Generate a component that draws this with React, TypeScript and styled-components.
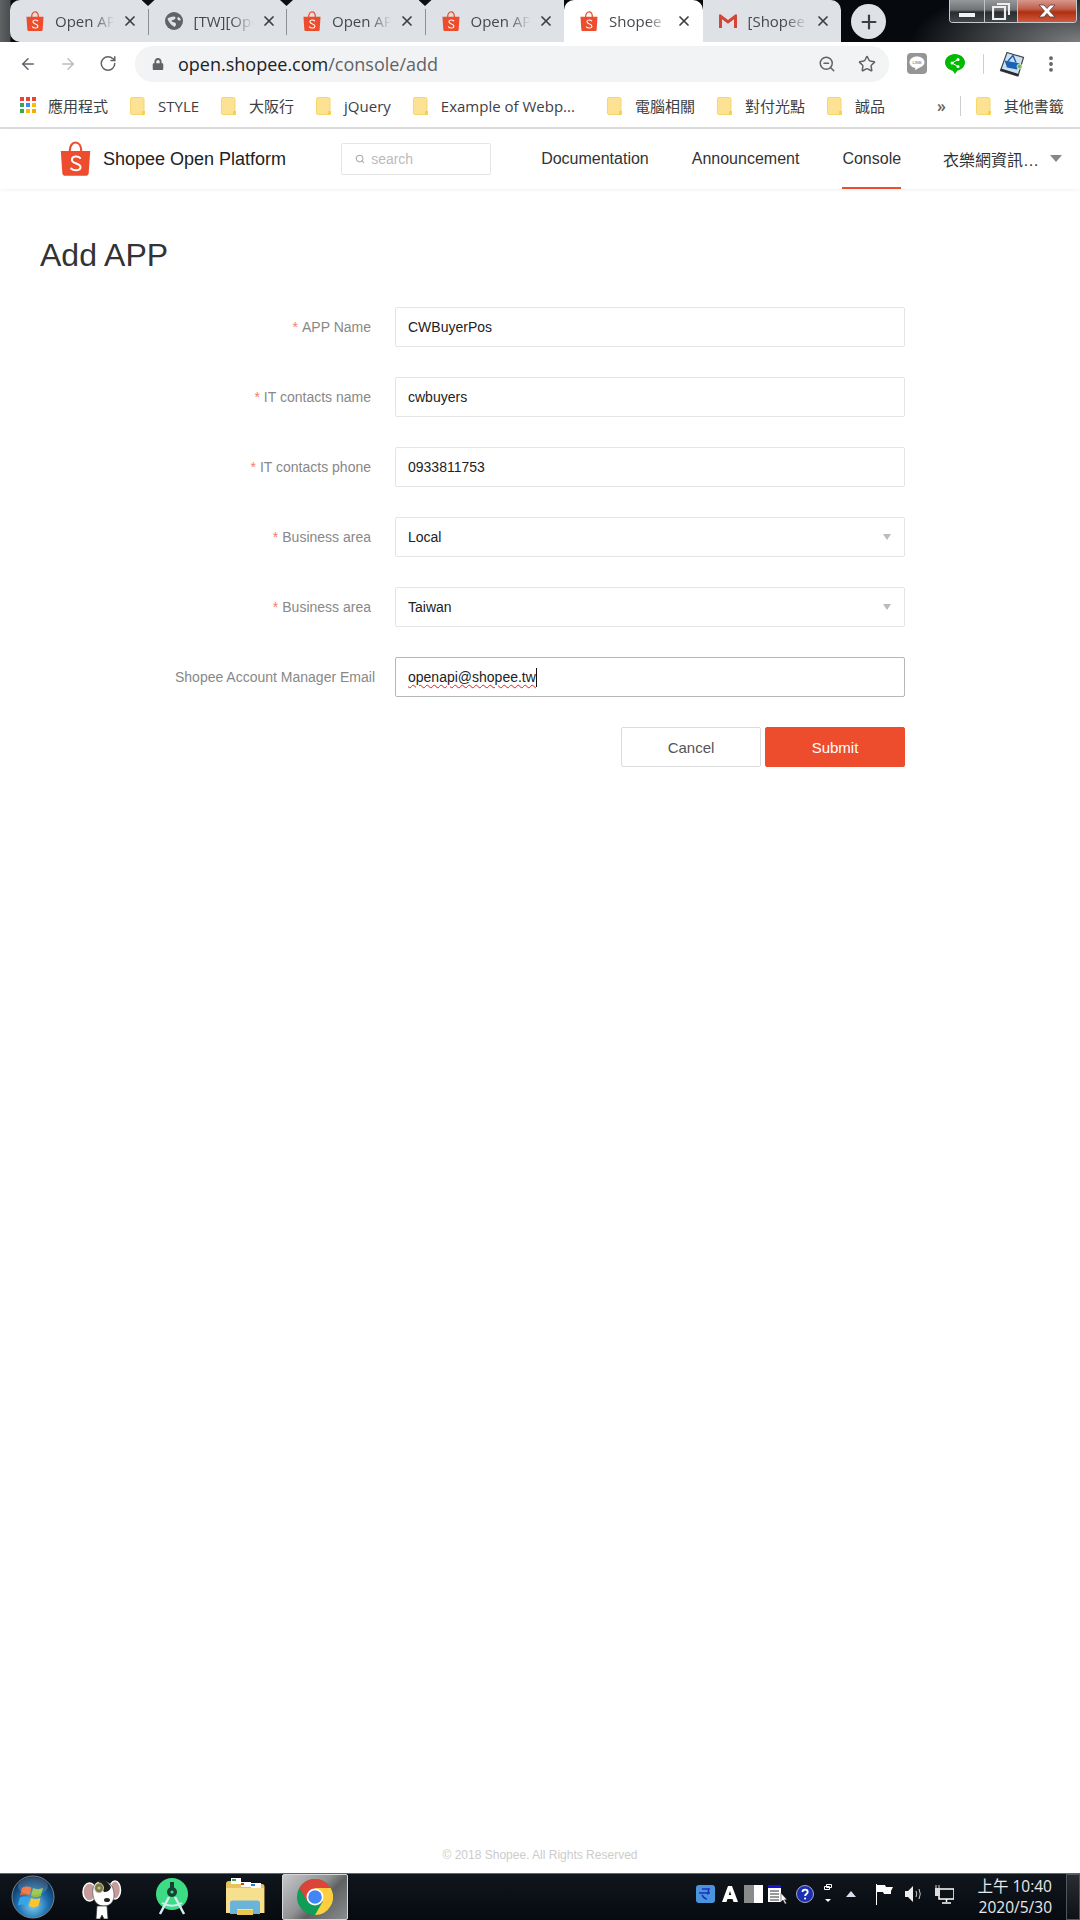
import React from "react";
import styled, { createGlobalStyle } from "styled-components";
import { ArrowLeft, ArrowRight, RotateCw, ZoomOut, Star, X, Plus, MoreVertical, Search } from "lucide-react";
import { FaLock } from "react-icons/fa";

const UI_FONT = `"Open Sans", "Noto Sans CJK TC", sans-serif`;
const WEB_FONT = `"Liberation Sans", "Noto Sans CJK TC", sans-serif`;

const Global = createGlobalStyle`
  html, body { margin: 0; padding: 0; background: #fff; }
  * { box-sizing: border-box; }
`;

const Page = styled.div`
  width: 1080px;
  height: 1920px;
  display: flex;
  flex-direction: column;
  font-family: ${WEB_FONT};
  overflow: hidden;
`;

/* ---------- browser tab strip ---------- */
const TabStrip = styled.div`
  height: 42px;
  flex: none;
  display: flex;
  padding-left: 10px;
  background:
    radial-gradient(ellipse 170px 60px at 100% 100%, #7c7e80, transparent),
    linear-gradient(90deg, #606365 0, #4a4c4e 10px, #0a0c10 11px, #05080c 100%);
`;

const Tab = styled.div<{ $active?: boolean; $sep?: boolean; $first?: boolean; $last?: boolean }>`
  position: relative;
  width: 138.5px;
  height: 42px;
  flex: none;
  display: flex;
  align-items: center;
  padding-left: 16px;
  background: ${(p) => (p.$active ? "#fff" : "#dee1e6")};
  border-radius: ${(p) => (p.$active ? "10px 10px 0 0" : p.$first ? "10px 0 0 10px" : p.$last ? "0 10px 0 0" : "0")};
  &::after {
    content: "";
    display: ${(p) => (p.$sep ? "block" : "none")};
    position: absolute;
    right: 0;
    top: 9px;
    width: 1px;
    height: 26px;
    background: #8b8e93;
  }
  &::before {
    content: "";
    display: ${(p) => (p.$sep ? "block" : "none")};
    position: absolute;
    right: -6px;
    top: 0;
    width: 13px;
    height: 6px;
    z-index: 1;
    clip-path: polygon(0 0, 100% 0, 50% 100%);
    background: #0c0e12;
  }
`;

const TabIcon = styled.span`
  width: 18px;
  height: 20px;
  flex: none;
  display: flex;
  align-items: center;
  justify-content: center;
  color: #5f6368;
`;

const TabTitle = styled.span`
  width: 62px;
  margin-left: 11px;
  flex: none;
  overflow: hidden;
  white-space: nowrap;
  font: 15px ${UI_FONT};
  color: #45484c;
  -webkit-mask-image: linear-gradient(90deg, #000 60%, transparent 96%);
  mask-image: linear-gradient(90deg, #000 60%, transparent 96%);
`;

const TabClose = styled.span`
  width: 16px;
  height: 16px;
  margin-left: 5px;
  flex: none;
  display: flex;
  color: #3c4043;
`;

const NewTab = styled.div`
  width: 35px;
  height: 35px;
  margin: 4px 0 0 10px;
  flex: none;
  border-radius: 50%;
  background: #dee1e6;
  color: #3c4043;
  display: flex;
  align-items: center;
  justify-content: center;
`;

const WinControls = styled.div`
  margin: 0 3px 0 auto;
  height: 23px;
  width: 128px;
  flex: none;
  display: flex;
  border: 1px solid #c5c8cc;
  border-top: none;
  border-radius: 0 0 4px 4px;
  overflow: hidden;
`;

const WinButton = styled.div<{ $w: number; $close?: boolean }>`
  width: ${(p) => p.$w}px;
  flex: none;
  display: flex;
  align-items: center;
  justify-content: center;
  border-right: 1px solid #bfc2c5;
  background: ${(p) =>
    p.$close
      ? "linear-gradient(180deg,#d8968a 0,#c0604e 40%,#b02f12 55%,#cf5a3e 100%)"
      : "linear-gradient(180deg,#96989a 0,#6f7275 45%,#2a2d30 55%,#44474a 100%)"};
  &:last-child { border-right: none; }
`;

/* ---------- toolbar ---------- */
const Toolbar = styled.div`
  height: 46px;
  flex: none;
  display: flex;
  align-items: center;
  padding: 0 0 3px 19px;
  background: #fff;
  color: #5f6368;
`;

const NavIcon = styled.span<{ $dim?: boolean }>`
  width: 18px;
  height: 20px;
  margin-right: 22px;
  flex: none;
  display: flex;
  color: ${(p) => (p.$dim ? "#babcbe" : "#5f6368")};
  &:nth-child(3) { margin-right: 18px; }
`;

const Omnibox = styled.div`
  width: 754px;
  height: 36px;
  flex: none;
  display: flex;
  align-items: center;
  padding: 0 13px 0 17px;
  border-radius: 18px;
  background: #f1f3f4;
`;

const UrlText = styled.div`
  margin-left: 14px;
  flex: 1;
  font: 18px ${UI_FONT};
  color: #202124;
  white-space: nowrap;
`;

const UrlPath = styled.span`
  color: #5f6368;
`;

const OmniIcon = styled.span`
  display: flex;
  margin-left: 22px;
  color: #5f6368;
`;

const ToolGroup = styled.div`
  margin-left: 18px;
  display: flex;
  align-items: center;
`;

const ToolDivider = styled.span`
  width: 1px;
  height: 20px;
  margin: 0 15px 0 18px;
  background: #cdced0;
`;

const MenuDots = styled.span`
  display: flex;
  margin-left: 16px;
  color: #5f6368;
`;

/* ---------- bookmarks ---------- */
const Bookmarks = styled.div`
  height: 41px;
  flex: none;
  display: flex;
  align-items: center;
  padding: 0 0 4px 20px;
  background: #fff;
  border-bottom: 2px solid #dadce0;
  font: 15px ${UI_FONT};
  color: #3c4043;
`;

const Bookmark = styled.div<{ $after?: number }>`
  display: flex;
  align-items: center;
  flex: none;
  gap: 12px;
  margin-right: ${(p) => p.$after ?? 22}px;
  white-space: nowrap;
`;

const Overflow = styled.span`
  margin-left: 30px;
  font-size: 16px;
  font-weight: 600;
  color: #5f6368;
`;

const BarDivider = styled.span`
  width: 1px;
  height: 20px;
  flex: none;
  margin: 0 15px 0 14px;
  background: #cdced0;
`;

/* ---------- site header ---------- */
const SiteHeader = styled.header`
  position: relative;
  height: 60px;
  flex: none;
  display: flex;
  align-items: center;
  padding-left: 60px;
  background: #fff;
  box-shadow: 0 1px 4px rgba(0, 0, 0, 0.06);
`;

const Brand = styled.div`
  margin-left: 12px;
  font-size: 18px;
  color: #222;
  white-space: nowrap;
`;

const SearchBox = styled.div`
  width: 150px;
  height: 32px;
  margin-left: 55px;
  flex: none;
  display: flex;
  align-items: center;
  gap: 6px;
  padding-left: 13px;
  border: 1px solid #e5e5e5;
  border-radius: 2px;
  font-size: 14px;
  color: #bbb;
`;

const Nav = styled.nav`
  margin-left: 50px;
  height: 60px;
  display: flex;
  align-items: stretch;
  gap: 43px;
`;

const NavItem = styled.a<{ $active?: boolean; $account?: boolean }>`
  display: flex;
  align-items: center;
  font-size: 16px;
  color: #333;
  white-space: nowrap;
  padding-top: 1px;
  margin-left: ${(p) => (p.$account ? "-1px" : "0")};
  border-bottom: 2px solid ${(p) => (p.$active ? "#ee4d2d" : "transparent")};
`;

const AccountName = styled.span`
  width: 95px;
  overflow: hidden;
  white-space: nowrap;
`;

const Caret = styled.span`
  width: 0;
  height: 0;
  margin-left: 12px;
  border-left: 6px solid transparent;
  border-right: 6px solid transparent;
  border-top: 7px solid #888;
`;

/* ---------- main form ---------- */
const Main = styled.main`
  flex: 1;
  display: flex;
  flex-direction: column;
  padding: 46px 0 0;
`;

const Title = styled.h1`
  margin: 0 0 32px 40px;
  font-size: 32px;
  line-height: 40px;
  font-weight: 400;
  color: #333;
`;

const Form = styled.div`
  width: 905px;
  display: flex;
  flex-direction: column;
  gap: 30px;
`;

const Row = styled.div`
  display: flex;
  align-items: center;
`;

const Label = styled.label<{ $flush?: boolean }>`
  width: ${(p) => (p.$flush ? 375 : 371)}px;
  margin-right: ${(p) => (p.$flush ? 20 : 24)}px;
  flex: none;
  text-align: right;
  font-size: 14px;
  color: #888;
  white-space: nowrap;
`;

const Required = styled.span`
  color: #f4806a;
  margin-right: 4px;
`;

const Field = styled.div<{ $focus?: boolean }>`
  position: relative;
  flex: 1;
  height: 40px;
  display: flex;
  align-items: center;
  padding: 0 12px;
  border: 1px solid ${(p) => (p.$focus ? "#b7b7b7" : "#e5e5e5")};
  border-radius: 2px;
  font-size: 14px;
  color: #222;
`;

const SpellError = styled.span`
  text-decoration: underline wavy #e02020 1px;
  text-underline-offset: 2px;
`;

const TextCaret = styled.span`
  width: 1px;
  height: 19px;
  background: #111;
`;

const SelectArrow = styled.span`
  position: absolute;
  right: 13px;
  top: 16px;
  width: 0;
  height: 0;
  border-left: 4px solid transparent;
  border-right: 4px solid transparent;
  border-top: 6px solid #bbb;
`;

const Actions = styled.div`
  display: flex;
  justify-content: flex-end;
  gap: 4px;
`;

const Button = styled.button<{ $primary?: boolean }>`
  width: 140px;
  height: 40px;
  padding: 0;
  border: 1px solid ${(p) => (p.$primary ? "#ee4d2d" : "#dcdcdc")};
  border-radius: 2px;
  background: ${(p) => (p.$primary ? "#ee4d2d" : "#fff")};
  color: ${(p) => (p.$primary ? "#fff" : "#555")};
  font: 15px ${WEB_FONT};
`;

const Footer = styled.footer`
  margin-top: auto;
  height: 25px;
  text-align: center;
  font-size: 12px;
  line-height: 14px;
  color: #ccc;
`;

/* ---------- windows taskbar ---------- */
const Taskbar = styled.div`
  height: 47px;
  flex: none;
  display: flex;
  align-items: center;
  border-top: 1px solid #5e6670;
  background: linear-gradient(180deg, #10161d 0, #070b10 100%);
  color: #eee;
`;

const TaskSlot = styled.div<{ $w: number; $active?: boolean }>`
  width: ${(p) => p.$w}px;
  height: 46px;
  flex: none;
  display: flex;
  align-items: center;
  justify-content: center;
  ${(p) =>
    p.$active
      ? `background: linear-gradient(135deg,#c6c8ca 0,#8f9193 45%,#5f6163 60%,#8a8c8e 100%); border: 1px solid #d5d7d9; border-radius: 2px;`
      : ""}
`;

const Tray = styled.div`
  margin-left: auto;
  display: flex;
  align-items: center;
  height: 46px;
`;

const TrayIcon = styled.span<{ $gap: number }>`
  display: flex;
  margin-left: ${(p) => p.$gap}px;
  margin-top: -6px;
`;

const Clock = styled.div`
  width: 76px;
  margin-left: 22px;
  text-align: right;
  font: 15.5px/21px ${UI_FONT};
  color: #e8e8e8;
`;

const ShowDesktop = styled.div`
  width: 14px;
  height: 46px;
  margin-left: 14px;
  border: 1px solid #50565c;
  background: linear-gradient(180deg, #2a2e33, #0d1014);
`;

/* ---------- drawings ---------- */
const ShopeeBag = ({ size = 18 }: { size?: number }) => (
  <svg width={size} height={size * 1.14} viewBox="0 0 24 27">
    <path d="M7.5 8C7.5 3.5 9.5 1 12 1s4.5 2.5 4.5 7" fill="none" stroke="#ee4d2d" strokeWidth="1.7" />
    <path d="M.6 7.5h22.8l-1.2 17.3c-.1 1.2-1 2-2.1 2H3.9c-1.1 0-2-.8-2.1-2z" fill="#ee4d2d" />
    <path d="M15.6 13c-1.4-1.5-6.4-1.9-6.4 1.3 0 3.4 6.7 2.5 6.7 5.7 0 3.2-5.4 3.1-7.3 1.1" fill="none" stroke="#fff" strokeWidth="1.5" strokeLinecap="round" />
  </svg>
);

const GlobeIcon = () => (
  <svg width="18" height="18" viewBox="0 0 18 18">
    <circle cx="9" cy="9" r="9" fill="#5f6368" />
    <path d="M2.500 6.500C4 5.500 6 4.500 9 4.500c1.500 0 2 1.500 1 2.500-1 1-3 .8-3.500 2 .5 1.500 4 .8 4.500 3 .2 1-.5 2-1.500 3-2-1-4-3-5-4.500-1-1.500-2-3-2-4zM13 5c1.200.2 2.500 1.500 3 3-1.200.8-3 .5-3.500-.8-.3-.8 0-1.800.5-2.200z" fill="#dee1e6" />
  </svg>
);

const GmailIcon = () => (
  <svg width="18" height="14" viewBox="0 0 18 14">
    <path d="M0 1.5C0 .5 1 0 1.8 .4L9 6 16.2 .4C17 0 18 .5 18 1.5V14h-3V5.200L9 9.800 3 5.200V14H0z" fill="#d44638" />
  </svg>
);

const Folder = () => (
  <svg width="16" height="18" viewBox="0 0 16 18">
    <rect x=".5" y=".5" width="13.5" height="17" rx="1.5" fill="#fde293" stroke="#f5d76e" />
    <path d="M12 18v-4h3v3a1 1 0 0 1-1 1z" fill="#fbd04f" />
  </svg>
);

const AppsGrid = () => (
  <svg width="16" height="17" viewBox="0 0 16 17">
    {[
      ["#ea4335", "#ea4335", "#ea4335"],
      ["#34a853", "#4285f4", "#fbbc05"],
      ["#34a853", "#fbbc05", "#f9ab00"],
    ].map((r, y) =>
      r.map((c, x) => <rect key={`${x}${y}`} x={x * 6} y={y * 6} width="4" height="4" fill={c} />)
    )}
  </svg>
);

const LineIcon = () => (
  <svg width="20" height="21" viewBox="0 0 20 21">
    <rect width="20" height="21" rx="4" fill="#959595" />
    <path d="M10 3.500c-4.200 0-7.500 2.600-7.500 5.800 0 2.900 2.500 5.200 5.900 5.700l-.3 2.300 3.700-2.400c3-.8 5.700-2.900 5.700-5.600 0-3.200-3.300-5.800-7.500-5.800z" fill="#fff" />
    <text x="10" y="11" textAnchor="middle" fontSize="4" fontWeight="700" fontFamily="Liberation Sans" fill="#959595">LINE</text>
  </svg>
);

const ShareBubble = () => (
  <svg width="20" height="21" viewBox="0 0 20 21">
    <path d="M10 1C4.500 1 0 4.800 0 9.500c0 4 3.300 7.300 7.800 8.200L10 21l2.200-3.300c4.500-.9 7.800-4.200 7.800-8.200C20 4.800 15.500 1 10 1z" fill="#00b900" />
    <g fill="#fff">
      <circle cx="7" cy="10" r="1.500" />
      <circle cx="13" cy="6.500" r="1.500" />
      <circle cx="13" cy="13.500" r="1.500" />
      <path d="M13 6.500 7 10l6 3.500" fill="none" stroke="#fff" />
    </g>
  </svg>
);

const BasketExt = () => (
  <svg width="26" height="26" viewBox="0 0 26 26">
    <path d="M8 1.500 24.500 6.500 19 25 1.500 19.500z" fill="#cfe0ee" stroke="#3c4550" strokeWidth="1.2" />
    <path d="M2 17.500 19.800 23 19 25 1.500 19.500z" fill="#26292d" />
    <path d="M5.500 9.500 21 12.500l-3 6-10-2z" fill="#1a62b8" />
    <path d="M9 10l5-5.500 3 7" fill="none" stroke="#1a62b8" strokeWidth="1.500" />
    <circle cx="20.500" cy="15.500" r="2.500" fill="#6cc04a" stroke="#fff" strokeWidth=".6" />
  </svg>
);

const StartOrb = () => (
  <svg width="44" height="44" viewBox="0 0 44 44">
    <defs>
      <radialGradient id="orb" cx="50%" cy="70%" r="65%">
        <stop offset="0" stopColor="#7fd0f0" />
        <stop offset=".55" stopColor="#1d6fb0" />
        <stop offset="1" stopColor="#0a2d55" />
      </radialGradient>
    </defs>
    <circle cx="22" cy="22" r="21" fill="url(#orb)" stroke="#78858f" strokeWidth="1" />
    <path d="M11 13c3-2 6-2 9.500-.5l-2 8c-3-1.500-6-1.500-9.500 0z" fill="#f0642a" />
    <path d="M22 13c3 1.500 6 1.500 10 0l-2.200 8c-3 1.500-6 1.500-9.800 0z" fill="#8fc03a" />
    <path d="M9 22.500c3-1.500 6-1.500 9.200 0l-2 8c-3-1.500-6-1.500-9.500 0z" fill="#35a5e8" />
    <path d="M20 23c3 1.500 6 1.500 9.500 0l-2 8c-3 1.500-6 1.500-9.500 0z" fill="#fdc42c" />
    <ellipse cx="22" cy="11" rx="15" ry="9" fill="#fff" opacity=".16" />
  </svg>
);

const DogIcon = () => (
  <svg width="40" height="44" viewBox="0 0 40 44">
    <ellipse cx="7.500" cy="17" rx="6.500" ry="9" fill="#c59b9b" stroke="#fff" strokeWidth="1.500" />
    <ellipse cx="33" cy="15" rx="5.500" ry="9" fill="#c59b9b" stroke="#fff" strokeWidth="1.500" />
    <path d="M20 6C12 6 10 13 11 20c1 7 5 11 11 11s10-4 10-11C32 12 28 6 20 6z" fill="#fff" stroke="#444" strokeWidth=".6" />
    <path d="M16 5c5-1 10 1 13 7-1 4-4 5-7 5-2-3-5-7-6-12z" fill="#1b1b1b" />
    <ellipse cx="17" cy="13" rx="4.500" ry="5" fill="#777a3e" stroke="#ddd" strokeWidth=".8" />
    <circle cx="17" cy="13" r="1.600" fill="#c2c088" />
    <ellipse cx="25" cy="25" rx="3" ry="2" fill="#222" />
    <path d="M15 31h10l1 13h-4l-2-4-2 4h-4z" fill="#fff" stroke="#333" strokeWidth=".7" />
  </svg>
);

const StudioIcon = () => (
  <svg width="34" height="38" viewBox="0 0 34 38">
    <circle cx="17" cy="16" r="16" fill="#3ddc84" />
    <circle cx="17" cy="14" r="5" fill="#173f33" />
    <rect x="15" y="4" width="4" height="6" fill="#173f33" />
    <circle cx="17" cy="14" r="1.600" fill="#3ddc84" />
    <path d="M14 19 5 36M20 19l9 17" stroke="#d5e8f5" strokeWidth="2.500" fill="none" />
    <path d="M7 25c6 3.500 14 3.500 20 0" stroke="#d5e8f5" strokeWidth="2" fill="none" />
  </svg>
);

const ExplorerIcon = () => (
  <svg width="40" height="40" viewBox="0 0 40 40">
    <path d="M1 7c0-2 1-3 3-3h10l3 3h20c1.500 0 2.500 1 2.500 2.500V36H1z" fill="#e6c35c" />
    <rect x="6" y="1" width="10" height="6" fill="#fff" />
    <rect x="16" y="5" width="10" height="5" fill="#fff" />
    <rect x="26" y="6" width="10" height="5" fill="#fff" />
    <rect x="7" y="2" width="4" height="2" fill="#3aa655" />
    <rect x="16" y="6" width="3" height="2" fill="#d33" />
    <rect x="26" y="7" width="4" height="2" fill="#2a7ad5" />
    <path d="M1 11h38v25H1z" fill="#f6e08e" />
    <path d="M5 37V26c0-1.500 1-2.500 2.500-2.500h25c1.500 0 2.500 1 2.500 2.500v11H28v-5H12v5z" fill="#6cb3d9" />
    <rect x="12" y="33" width="16" height="5" fill="#e9c64f" />
  </svg>
);

const ChromeLogo = () => (
  <svg width="36" height="36" viewBox="0 0 36 36">
    <circle cx="18" cy="18" r="18" fill="#0f9d58" />
    <path d="M33.600 9A18 18 0 0 0 2.400 9l7.800 13.500L18 9z" fill="#db4437" />
    <path d="M33.600 9H18l7.800 13.500L18 36A18 18 0 0 0 33.600 9z" fill="#ffcd40" />
    <circle cx="18" cy="18" r="8.500" fill="#fff" />
    <circle cx="18" cy="18" r="6.800" fill="#4285f4" />
  </svg>
);

const TrayBlue = () => (
  <svg width="19" height="20" viewBox="0 0 19 20">
    <rect y="1" width="19" height="18" rx="3" fill="#4a94dd" />
    <path d="M6 5h7l-1.500 5.500M3 9h11M6 11c2 3 3 4 5 4" stroke="#1c2fc0" strokeWidth="1.500" fill="none" />
  </svg>
);

const TrayA = () => (
  <svg width="18" height="18" viewBox="0 0 18 18">
    <path d="M7 1h4l6 16h-4.500l-1-3H6.500l-1 3H1zM7.800 10h2.400L9 6z" fill="#fff" />
  </svg>
);

const TrayBox = () => (
  <svg width="19" height="18" viewBox="0 0 19 18">
    <rect width="19" height="18" fill="#fff" />
    <rect width="10" height="18" fill="#8a8a8a" />
  </svg>
);

const TrayList = () => (
  <svg width="19" height="19" viewBox="0 0 19 19">
    <rect width="13" height="17" fill="#fff" />
    <rect width="13" height="3" fill="#1515d0" />
    <path d="M2 6h9M2 9h9M2 12h9M2 15h9" stroke="#333" />
    <path d="M13 8v9l2-2 2 4 1.500-.7-2-3.500h2.500z" fill="#fff" stroke="#222" strokeWidth=".5" />
  </svg>
);

const TrayHelp = () => (
  <svg width="18" height="18" viewBox="0 0 18 18">
    <circle cx="9" cy="9" r="8.500" fill="#1a2fb5" stroke="#aab" />
    <path d="M6.500 7c0-3.200 5.200-3.200 5.200 0 0 2-2.600 2-2.600 4" stroke="#fff" strokeWidth="1.800" fill="none" />
    <circle cx="9.100" cy="13.500" r="1.100" fill="#fff" />
  </svg>
);

const TrayMini = () => (
  <svg width="8" height="20" viewBox="0 0 8 20">
    <path d="M2.500 .5h5v3h-5zM.5 2.500h5v3h-5z" fill="#0a0c10" stroke="#fff" />
    <path d="M1 15h6l-3 3z" fill="#fff" />
  </svg>
);

const TrayUp = () => (
  <svg width="10" height="6" viewBox="0 0 10 6">
    <path d="M5 0l5 6H0z" fill="#dde" />
  </svg>
);

const TrayFlag = () => (
  <svg width="17" height="21" viewBox="0 0 17 21">
    <path d="M.5 0v21" stroke="#fff" />
    <path d="M1 1h8l1 2h7l-2 4 0 3H8l-1-2H1z" fill="#fff" />
  </svg>
);

const TraySound = () => (
  <svg width="18" height="18" viewBox="0 0 18 18">
    <path d="M0 6h3l5-5v16l-5-5H0z" fill="#eee" />
    <path d="M11 6q1.500 3 0 6M14 4q2.500 5 0 10" stroke="#ccc" fill="none" />
  </svg>
);

const TrayNet = () => (
  <svg width="19" height="19" viewBox="0 0 19 19">
    <rect x="4" y="4" width="15" height="10" fill="none" stroke="#fff" strokeWidth="1.500" />
    <path d="M11.500 14v3M7 18h9" stroke="#fff" strokeWidth="1.500" />
    <rect x="0" y="3" width="5" height="8" fill="#ddd" />
    <path d="M1 0v3M4 0v3" stroke="#ddd" />
  </svg>
);

const TabX = () => <X size={16} strokeWidth={2.6} />;

const tabs = [
  { title: "Open API", icon: <ShopeeBag />, sep: true, first: true },
  { title: "[TW][Open", icon: <GlobeIcon />, sep: true },
  { title: "Open API", icon: <ShopeeBag />, sep: true },
  { title: "Open API", icon: <ShopeeBag /> },
  { title: "Shopee", icon: <ShopeeBag />, active: true },
  { title: "[Shopee", icon: <GmailIcon />, last: true },
];

const bookmarks: { label: string; icon: React.ReactNode; after?: number }[] = [
  { label: "應用程式", icon: <AppsGrid /> },
  { label: "STYLE", icon: <Folder /> },
  { label: "大阪行", icon: <Folder /> },
  { label: "jQuery", icon: <Folder /> },
  { label: "Example of Webp...", icon: <Folder />, after: 32 },
  { label: "電腦相關", icon: <Folder /> },
  { label: "對付光點", icon: <Folder /> },
  { label: "誠品", icon: <Folder /> },
];

export default function App() {
  return (
    <Page>
      <Global />
      <TabStrip>
        {tabs.map((t, i) => (
          <Tab key={i} $active={t.active} $sep={t.sep} $first={t.first} $last={t.last}>
            <TabIcon>{t.icon}</TabIcon>
            <TabTitle>{t.title}</TabTitle>
            <TabClose>
              <TabX />
            </TabClose>
          </Tab>
        ))}
        <NewTab>
          <Plus size={22} strokeWidth={2.4} />
        </NewTab>
        <WinControls>
          <WinButton $w={35}>
            <svg width="16" height="16" viewBox="0 0 16 16"><rect y="10" width="16" height="4" fill="#f2f2f2" /></svg>
          </WinButton>
          <WinButton $w={33}>
            <svg width="18" height="18" viewBox="0 0 18 18"><path d="M5 2h12v11M1 5h12v12H1z" fill="none" stroke="#eee" strokeWidth="2.200" /></svg>
          </WinButton>
          <WinButton $w={58} $close>
            <svg width="18" height="14" viewBox="0 0 18 14"><path d="M1 1h5l3 3.500L12 1h5l-5.500 6L17 13h-5L9 9.500 6 13H1l5.500-6z" fill="#fff" stroke="#5a3b38" strokeWidth=".8" /></svg>
          </WinButton>
        </WinControls>
      </TabStrip>

      <Toolbar>
        <NavIcon><ArrowLeft size={20} strokeWidth={2} /></NavIcon>
        <NavIcon $dim><ArrowRight size={20} strokeWidth={2} /></NavIcon>
        <NavIcon><RotateCw size={19} strokeWidth={2} /></NavIcon>
        <Omnibox>
          <FaLock size={12} />
          <UrlText>
            open.shopee.com<UrlPath>/console/add</UrlPath>
          </UrlText>
          <OmniIcon><ZoomOut size={18} strokeWidth={2} /></OmniIcon>
          <OmniIcon><Star size={18} strokeWidth={2} /></OmniIcon>
        </Omnibox>
        <ToolGroup>
          <LineIcon />
          <ToolGroup><ShareBubble /></ToolGroup>
          <ToolDivider />
          <BasketExt />
          <MenuDots><MoreVertical size={20} strokeWidth={2.6} /></MenuDots>
        </ToolGroup>
      </Toolbar>

      <Bookmarks>
        {bookmarks.map((b) => (
          <Bookmark key={b.label} $after={b.after}>
            {b.icon}
            <span>{b.label}</span>
          </Bookmark>
        ))}
        <Overflow>»</Overflow>
        <BarDivider />
        <Bookmark $after={0}>
          <Folder />
          <span>其他書籤</span>
        </Bookmark>
      </Bookmarks>

      <SiteHeader>
        <ShopeeBag size={31} />
        <Brand>Shopee Open Platform</Brand>
        <SearchBox>
          <Search size={10} strokeWidth={2.5} color="#aaa" />
          search
        </SearchBox>
        <Nav>
          <NavItem>Documentation</NavItem>
          <NavItem>Announcement</NavItem>
          <NavItem $active>Console</NavItem>
          <NavItem $account>
            <AccountName>衣樂網資訊…</AccountName>
            <Caret />
          </NavItem>
        </Nav>
      </SiteHeader>

      <Main>
        <Title>Add APP</Title>
        <Form>
          <Row>
            <Label><Required>*</Required>APP Name</Label>
            <Field>CWBuyerPos</Field>
          </Row>
          <Row>
            <Label><Required>*</Required>IT contacts name</Label>
            <Field>cwbuyers</Field>
          </Row>
          <Row>
            <Label><Required>*</Required>IT contacts phone</Label>
            <Field>0933811753</Field>
          </Row>
          <Row>
            <Label><Required>*</Required>Business area</Label>
            <Field>Local<SelectArrow /></Field>
          </Row>
          <Row>
            <Label><Required>*</Required>Business area</Label>
            <Field>Taiwan<SelectArrow /></Field>
          </Row>
          <Row>
            <Label $flush>Shopee Account Manager Email</Label>
            <Field $focus>
              <SpellError>openapi@shopee.tw</SpellError>
              <TextCaret />
            </Field>
          </Row>
          <Actions>
            <Button>Cancel</Button>
            <Button $primary>Submit</Button>
          </Actions>
        </Form>
        <Footer>© 2018 Shopee. All Rights Reserved</Footer>
      </Main>

      <Taskbar>
        <TaskSlot $w={66}><StartOrb /></TaskSlot>
        <TaskSlot $w={71}><DogIcon /></TaskSlot>
        <TaskSlot $w={70}><StudioIcon /></TaskSlot>
        <TaskSlot $w={75}><ExplorerIcon /></TaskSlot>
        <TaskSlot $w={66} $active><ChromeLogo /></TaskSlot>
        <Tray>
          <TrayIcon $gap={0}><TrayBlue /></TrayIcon>
          <TrayIcon $gap={6}><TrayA /></TrayIcon>
          <TrayIcon $gap={5}><TrayBox /></TrayIcon>
          <TrayIcon $gap={5}><TrayList /></TrayIcon>
          <TrayIcon $gap={9}><TrayHelp /></TrayIcon>
          <TrayIcon $gap={10}><TrayMini /></TrayIcon>
          <TrayIcon $gap={14}><TrayUp /></TrayIcon>
          <TrayIcon $gap={20}><TrayFlag /></TrayIcon>
          <TrayIcon $gap={12}><TraySound /></TrayIcon>
          <TrayIcon $gap={12}><TrayNet /></TrayIcon>
          <Clock>上午 10:40<br />2020/5/30</Clock>
          <ShowDesktop />
        </Tray>
      </Taskbar>
    </Page>
  );
}
